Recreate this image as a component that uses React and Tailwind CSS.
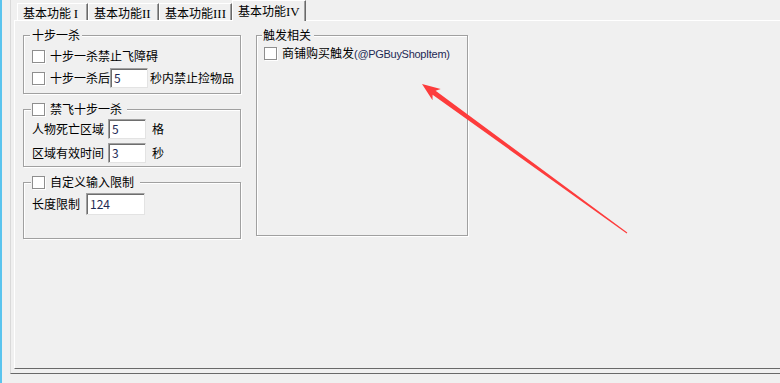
import React from 'react';

const cjk = "font-['Noto_Sans_CJK_SC',sans-serif]";
const roman = "font-['Liberation_Serif',serif]";

const Check = () => (
  <span className="block w-[13px] h-[13px] shrink-0 bg-white border border-[#8e8e8e] shadow-[1px_1px_0_#ffffff]" />
);

const Field = ({ value, width, height = 20 }) => (
  <div
    className={`${width} bg-white border border-[#a0a0a0] border-r-[#e3e3e3] border-b-[#e3e3e3] shadow-[inset_1px_1px_0_#6e6e6e] flex items-center pl-[3px] text-[12px] leading-[14px] text-[#1e2a55]`}
    style={{ height }}
  >
    {value}
  </div>
);

// etched group box, title sits over the top border
const Group = ({ title, check, titleBox, className, children }) => (
  <div className={`relative border border-[#a0a0a0] shadow-[1px_1px_0_#ffffff,inset_1px_1px_0_#ffffff] ${className}`}>
    <div className={`absolute -top-[8px] flex items-center gap-[5px] h-[14px] bg-[#f0f0f0] leading-[14px] ${titleBox}`}>
      {check && <Check />}
      <span>{title}</span>
    </div>
    {children}
  </div>
);

const Tab = ({ label, num, width, active }) =>
  active ? (
    <div
      className={`${width} relative z-10 h-[21px] self-start bg-[#f0f0f0] border-t border-l border-white shadow-[inset_-1px_0_0_#a0a0a0] border-r border-r-[#696969] pl-[5px] pt-[3px] leading-[14px]`}
    >
      基本功能<span className={`${roman} text-[13px]`}>{num}</span>
    </div>
  ) : (
    <div
      className={`${width} h-[17px] mt-[3px] bg-[#f0f0f0] border-t border-l border-white border-r border-r-[#696969] shadow-[inset_-1px_0_0_#a0a0a0] pl-[5px] pt-[2px] leading-[14px]`}
    >
      {label}
      <span className={`${roman} text-[13px]`}>{num}</span>
    </div>
  );

export default function App() {
  return (
    <div className={`relative w-[780px] h-[383px] overflow-hidden bg-[#f0f0f0] text-[12px] text-black ${cjk} flex`}>
      {/* left accent */}
      <div className="w-[2px] h-full bg-[#5ac4ee]" />

      {/* tab control frame */}
      <div className="ml-[8px] flex-1 h-[374px] flex flex-col border-l border-l-[#d9d9d9] border-b border-b-[#696969] pl-[3px] pb-[4px]">
        {/* Tabs */}
        <div className="h-[20px] flex pl-[3px]">
          <Tab label="基本功能 " num="I" width="w-[71px]" />
          <Tab label="基本功能" num="II" width="w-[71px]" />
          <Tab label="基本功能" num="III" width="w-[73px]" />
          <Tab num="IV" width="w-[74px]" active />
        </div>

        {/* Panel */}
        <div className="h-[349px] border-t border-l border-white border-b border-b-[#696969] pt-[14px] pl-[8px] flex items-start">
          {/* Left column */}
          <div className="w-[218px] flex flex-col">
            <Group title="十步一杀" titleBox="left-[6px] px-[2px]" className="h-[59px] pt-[12px] pl-[8px]">
              <div className="h-[16px] flex items-center gap-[5px]">
                <Check />
                <span className="leading-[14px]">十步一杀禁止飞障碍</span>
              </div>
              <div className="mt-[4px] h-[20px] flex items-center">
                <Check />
                <span className="ml-[5px] leading-[14px]">十步一杀后</span>
                <Field value="5" width="w-[38px]" />
                <span className="ml-[2px] leading-[14px]">秒内禁止捡物品</span>
              </div>
            </Group>

            <Group title="禁飞十步一杀" check titleBox="left-[7px] pl-[1px] pr-[5px]" className="mt-[15px] h-[58px] pt-[9px] pl-[8px]">
              <div className="h-[20px] flex items-center">
                <span className="w-[76px] leading-[14px]">人物死亡区域</span>
                <Field value="5" width="w-[38px]" />
                <span className="ml-[6px] leading-[14px]">格</span>
              </div>
              <div className="mt-[4px] h-[20px] flex items-center">
                <span className="w-[76px] leading-[14px]">区域有效时间</span>
                <Field value="3" width="w-[38px]" />
                <span className="ml-[6px] leading-[14px]">秒</span>
              </div>
            </Group>

            <Group title="自定义输入限制" check titleBox="left-[7px] pl-[1px] pr-[6px]" className="mt-[15px] h-[57px] pt-[10px] pl-[8px]">
              <div className="h-[22px] flex items-center">
                <span className="w-[54px] leading-[14px]">长度限制</span>
                <Field value="124" width="w-[59px]" height={22} />
              </div>
            </Group>
          </div>

          {/* Right column */}
          <Group title="触发相关" titleBox="left-[5px] pl-[1px] pr-[3px]" className="ml-[15px] w-[212px] h-[201px] pt-[11px] pl-[7px]">
            <div className="h-[13px] flex items-center gap-[5px]">
              <Check />
              <span className="leading-[14px] whitespace-nowrap">
                商铺购买触发
                <span className="font-['Liberation_Sans',sans-serif] text-[11px] tracking-[-0.3px] text-[#1e2a55]">(@PGBuyShopItem)</span>
              </span>
            </div>
          </Group>
        </div>
      </div>

      {/* annotation arrow */}
      <svg className="absolute left-0 top-0 pointer-events-none" width="780" height="383" viewBox="0 0 780 383">
        <polygon
          points="422,84 440.7,88.9 435.6,90.8 627.3,232.6 626.7,233.4 432.6,94.8 432.5,100.3"
          fill="#fd3c3c"
        />
      </svg>
    </div>
  );
}
